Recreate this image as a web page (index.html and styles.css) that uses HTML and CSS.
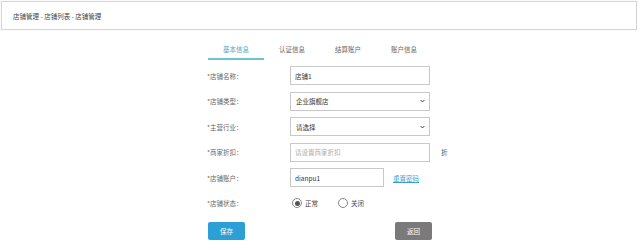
FILE: index.html
```html
<!DOCTYPE html>
<html lang="zh">
<head>
<meta charset="utf-8">
<title>店铺管理</title>
<link rel="stylesheet" href="styles.css">
</head>
<body>
<div class="crumb">店铺管理 - 店铺列表 - 店铺管理</div>
<div class="main">
  <div class="tabs">
    <div class="tab active">基本信息</div>
    <div class="tab">认证信息</div>
    <div class="tab">结算账户</div>
    <div class="tab">账户信息</div>
  </div>
  <div class="form">
    <div class="row">
      <label class="label">*店铺名称：</label>
      <input class="field" type="text" value="店铺1">
    </div>
    <div class="row">
      <label class="label">*店铺类型：</label>
      <div class="select">
        <span>企业旗舰店</span>
        <svg class="chev" viewBox="0 0 8 6" width="5" height="4"><path d="M1 1.5 L4 4.5 L7 1.5" fill="none" stroke="#333" stroke-width="1.5"/></svg>
      </div>
    </div>
    <div class="row">
      <label class="label">*主营行业：</label>
      <div class="select">
        <span>请选择</span>
        <svg class="chev" viewBox="0 0 8 6" width="5" height="4"><path d="M1 1.5 L4 4.5 L7 1.5" fill="none" stroke="#333" stroke-width="1.5"/></svg>
      </div>
    </div>
    <div class="row">
      <label class="label">*商家折扣：</label>
      <input class="field" type="text" placeholder="请设置商家折扣">
      <span class="unit">折</span>
    </div>
    <div class="row">
      <label class="label">*店铺账户：</label>
      <input class="field short" type="text" value="dianpu1">
      <a class="link" href="#">重置密码</a>
    </div>
    <div class="row">
      <label class="label">*店铺状态：</label>
      <div class="radios">
        <span class="radio"><span class="dot checked"></span>正常</span>
        <span class="radio"><span class="dot"></span>关闭</span>
      </div>
    </div>
    <div class="actions">
      <button class="btn save">保存</button>
      <button class="btn back">返回</button>
    </div>
  </div>
</div>
</body>
</html>
```

FILE: styles.css
```css
* { box-sizing: border-box; }
body {
  margin: 0;
  font-family: "Noto Sans CJK SC", "Noto Sans", "Liberation Sans", sans-serif;
  font-size: 6.5px;
  color: #555;
  background: #fff;
}
.crumb {
  margin: 1px 3px 0 1px;
  height: 29px;
  border: 1px solid #d6d6d6;
  box-shadow: 0 0 1px #e6e6e6;
  display: flex;
  align-items: center;
  padding-left: 11px;
  color: #444;
}
.main {
  margin-left: 207px;
  padding-top: 10px;
  width: 250px;
}
.tabs {
  display: flex;
  margin-left: 1px;
}
.tab {
  width: 56px;
  height: 20px;
  text-align: center;
  line-height: 18px;
  color: #666;
  border-bottom: 2px solid transparent;
}
.tab.active {
  color: #4aa6c6;
  border-bottom-color: #6cc3d3;
}
.form {
  padding-top: 6px;
  display: flex;
  flex-direction: column;
  gap: 6.5px;
}
.row {
  display: flex;
  align-items: center;
  height: 19px;
}
.label {
  width: 83px;
  color: #666;
}
.field {
  width: 140px;
  height: 19px;
  border: 1px solid #c8c8c8;
  font-family: inherit;
  font-size: 6.5px;
  color: #333;
  padding: 0 4px;
  outline: none;
}
.field::placeholder { color: #aaa; }
.field.short { width: 94px; }
.select {
  width: 140px;
  height: 19px;
  border: 1px solid #c8c8c8;
  display: flex;
  align-items: center;
  justify-content: space-between;
  padding: 0 4px 0 5px;
  color: #333;
}
.chev { display: block; }
.unit {
  margin-left: 11px;
  color: #555;
}
.link {
  margin-left: 9px;
  color: #3a9fcf;
  text-decoration: underline;
}
.radios {
  display: flex;
  gap: 20px;
  padding-left: 2px;
}
.radio {
  display: flex;
  align-items: center;
  gap: 3px;
  color: #444;
}
.dot {
  width: 10px;
  height: 10px;
  border-radius: 50%;
  border: 1px solid #888;
  display: flex;
  align-items: center;
  justify-content: center;
  background: #fff;
}
.dot.checked::after {
  content: "";
  width: 5px;
  height: 5px;
  border-radius: 50%;
  background: #555;
}
.actions {
  display: flex;
  justify-content: space-between;
  width: 224px;
  margin-left: 1px;
  margin-top: 3px;
}
.btn {
  width: 37px;
  height: 18px;
  border: none;
  border-radius: 2px;
  color: #fff;
  font-family: inherit;
  font-size: 6.5px;
  padding: 0;
}
.save { background: #2d9fd7; }
.back { background: #7a7a7a; }
```
